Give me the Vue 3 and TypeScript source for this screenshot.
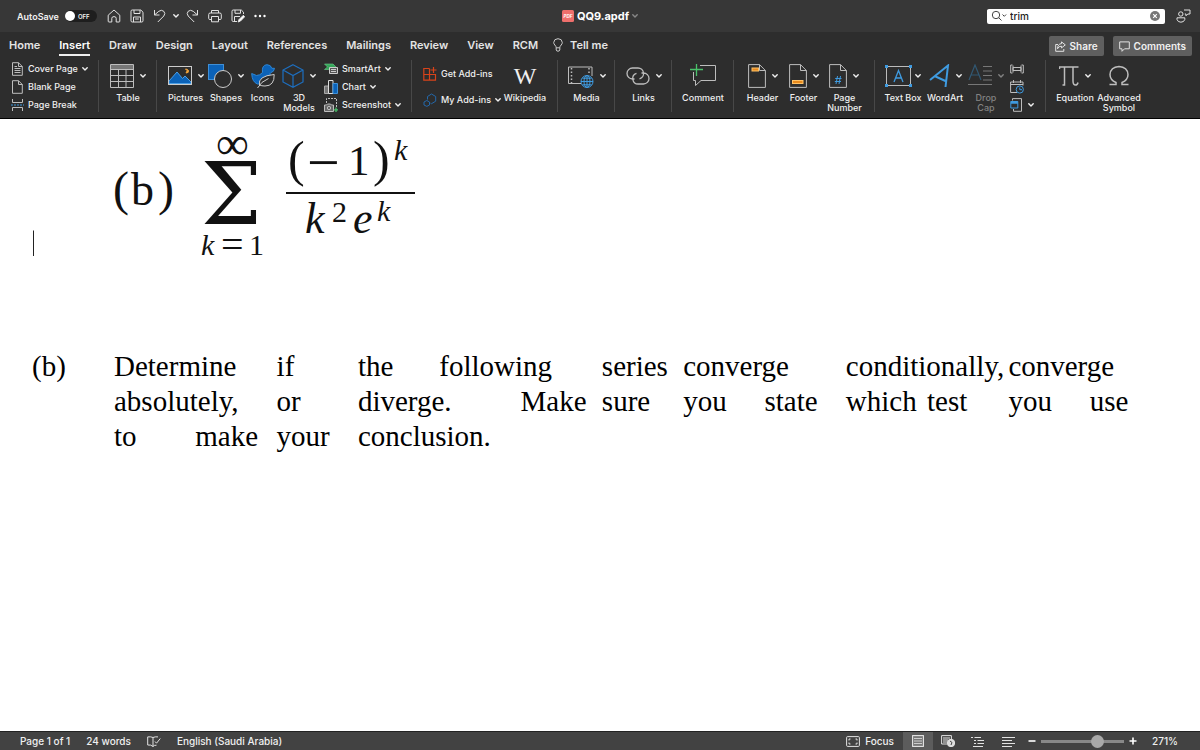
<script setup lang="ts">
import { h, ref } from 'vue'

const Chevron = () =>
  h('svg', { class: 'chev', viewBox: '0 0 6 6', width: 6, height: 6, 'aria-hidden': 'true' }, [
    h('path', {
      d: 'M.8 1.8 3 4l2.2-2.2',
      fill: 'none',
      stroke: 'currentColor',
      'stroke-width': 1.4,
      'stroke-linecap': 'round',
      'stroke-linejoin': 'round',
    }),
  ])

const tabs: string[] = ['Home', 'Insert', 'Draw', 'Design', 'Layout', 'References', 'Mailings', 'Review', 'View', 'RCM']
const activeTab = ref('Insert')
const search = ref('trim')
const zoomLevel = ref(71)
const autoSave = ref(false)

interface Word {
  text: string
  stop: number
}

const lines: Word[][] = [
  [
    { text: 'Determine', stop: 1 },
    { text: 'if', stop: 3 },
    { text: 'the', stop: 4 },
    { text: 'following', stop: 5 },
    { text: 'series', stop: 7 },
    { text: 'converge', stop: 8 },
    { text: 'conditionally,', stop: 10 },
    { text: 'converge', stop: 12 },
  ],
  [
    { text: 'absolutely,', stop: 1 },
    { text: 'or', stop: 3 },
    { text: 'diverge.', stop: 4 },
    { text: 'Make', stop: 6 },
    { text: 'sure', stop: 7 },
    { text: 'you', stop: 8 },
    { text: 'state', stop: 9 },
    { text: 'which', stop: 10 },
    { text: 'test', stop: 11 },
    { text: 'you', stop: 12 },
    { text: 'use', stop: 13 },
  ],
  [
    { text: 'to', stop: 1 },
    { text: 'make', stop: 2 },
    { text: 'your', stop: 3 },
    { text: 'conclusion.', stop: 4 },
  ],
]
</script>

<template>
  <div class="window">
    <header class="titlebar">
      <div class="quick">
        <label class="autosave">
          <span>AutoSave</span>
          <input v-model="autoSave" type="checkbox" class="sr" />
          <span class="toggle"><i></i>OFF</span>
        </label>
        <button class="ico home" aria-label="Home">
          <svg width="14" height="14" viewBox="0 0 14 14" class="line"><path d="M1.2 6.2 7 1l5.800 5.200V12.200q0 .8-.8.8H9.200V9.300Q9.200 7.600 7 7.600T4.800 9.300V13H2q-.8 0-.8-.8Z" /></svg>
        </button>
        <button class="ico" aria-label="Save">
          <svg width="14" height="14" viewBox="0 0 14 14" class="line"><path d="M1 2.200Q1 1 2.200 1H10.800L13 3.200V11.800Q13 13 11.800 13H2.200Q1 13 1 11.800ZM4 1V4.500H10V1M3.500 13V8H10.500V13M5.200 10H8.800" /></svg>
        </button>
        <button class="ico undo" aria-label="Undo">
          <svg width="13" height="14" viewBox="0 0 13 14" class="line"><path d="M1.500 1V6H6.500M1.700 5.800 5.800 2.300Q8.500.3 10.800 2.300 12.800 4.500 10.800 7L4.800 13" /></svg>
        </button>
        <button class="ico tight" aria-label="Undo history"><Chevron /></button>
        <button class="ico redo" aria-label="Redo">
          <svg width="13" height="14" viewBox="0 0 13 14" class="line"><path d="M11.500 1V6H6.500M11.300 5.800 7.200 2.300Q4.500.3 2.200 2.300.2 4.500 2.200 7L8.200 13" /></svg>
        </button>
        <button class="ico" aria-label="Print">
          <svg width="14" height="14" viewBox="0 0 14 14" class="line"><path d="M3.500 4V1.500H10.500V4M3.500 10.500H1.800Q.7 10.500.7 9.400V5.500Q.7 4 2.200 4H11.800Q13.300 4 13.300 5.500V9.400Q13.300 10.500 12.200 10.500H10.500M3.500 7.500H10.500V12.800H3.500Z" /></svg>
        </button>
        <button class="ico" aria-label="Save a copy">
          <svg width="14" height="14" viewBox="0 0 14 14" class="line"><path d="M6 12.500H2.200Q1 12.500 1 11.300V2.200Q1 1 2.200 1H10.300L12.500 3.200V5M4 1V4.300H9.500V1M3.500 12.500V7.500H9" /><path d="M7.200 13 8 10.600 12.300 6.300 13.700 7.700 9.500 12Z" fill="#fff" /></svg>
        </button>
        <button class="ico" aria-label="More">
          <svg width="12" height="4" viewBox="0 0 12 4" fill="#fff"><circle cx="1.500" cy="2" r="1.200" /><circle cx="6" cy="2" r="1.200" /><circle cx="10.500" cy="2" r="1.200" /></svg>
        </button>
      </div>
      <div class="doc-title">
        <svg width="12" height="12" viewBox="0 0 12 12" aria-hidden="true"><rect width="12" height="12" rx="1.500" fill="#ee6f6c" /><text x="6" y="7.800" font-size="4.500" font-weight="700" font-style="italic" fill="#fff" text-anchor="middle">PDF</text></svg>
        <strong>QQ9.apdf</strong>
        <span class="faint"><Chevron /></span>
      </div>
      <div class="title-right">
        <div class="search">
          <svg width="17" height="12" viewBox="0 0 17 12" fill="none" stroke="#444"><circle cx="5" cy="5" r="3.700" /><path d="M7.700 7.700 10.500 10.500M11.500 4.500 13.300 6.300 15.100 4.500" /></svg>
          <input v-model="search" type="text" aria-label="Search in document" />
          <button aria-label="Clear search">
            <svg width="10" height="10" viewBox="0 0 10 10"><circle cx="5" cy="5" r="5" fill="#777" /><path d="M3.200 3.200 6.800 6.800M6.800 3.200 3.200 6.800" stroke="#fff" stroke-width="1.200" /></svg>
          </button>
        </div>
        <button class="ico" aria-label="Account">
          <svg width="15" height="14" viewBox="0 0 15 14" class="line"><circle cx="4.800" cy="5" r="2.200" /><path d="M1 8.800H8.800V10.500Q8 13.200 4.900 13.200T1 10.500ZM8 1H14V5H11.800L10 6.800V5H8.800" /></svg>
        </button>
      </div>
    </header>

    <nav class="tabs">
      <button v-for="t in tabs" :key="t" class="tab" :class="{ active: t === activeTab }" @click="activeTab = t">{{ t }}</button>
      <button class="tab tell">
        <svg width="10" height="14" viewBox="0 0 10 14" fill="none" stroke="#ccc"><path d="M3.200 9.800Q3.200 8.300 1.800 7 .7 5.800.7 4.500.9.800 5 .7 9.100.8 9.300 4.500 9.300 5.800 8.200 7 6.800 8.300 6.800 9.800ZM3.200 9.800V12Q3.500 13.200 5 13.200T6.800 12V9.800" /></svg>
        Tell me
      </button>
      <div class="tab-actions">
        <button class="action">
          <svg width="11" height="11" viewBox="0 0 11 11" class="line"><path d="M3 3.500H.7V10.300H8.800V8M6.500.9 10.300 3.900 6.500 6.900V5.200Q3.700 5 2.500 7.800 2.700 2.900 6.500 2.600Z" /></svg>
          Share
        </button>
        <button class="action">
          <svg width="11" height="11" viewBox="0 0 11 11" class="line"><path d="M.7.900H10.300V7.800H5.500L3 10.300V7.800H.7Z" /></svg>
          Comments
        </button>
      </div>
    </nav>

    <section class="ribbon" aria-label="Insert">
      <div class="group pages">
        <div class="stack">
          <button class="row">
            <svg width="13" height="14" viewBox="0 0 13 14" class="grey"><path d="M1.500.7H7.500L11.300 4.500V13.300H1.500ZM7.500.7V4.500H11.300M3.500 4.500H6M3.500 6.500H9.500M3.500 8.500H9.500M3.500 10.500H9.500" /></svg>
            Cover Page <Chevron />
          </button>
          <button class="row">
            <svg width="13" height="14" viewBox="0 0 13 14" class="grey"><path d="M1.500.7H7.500L11.300 4.500V13.300H1.500ZM7.500.7V4.500H11.300" /></svg>
            Blank Page
          </button>
          <button class="row">
            <svg width="13" height="14" viewBox="0 0 13 14" class="grey"><path d="M1.500 1V4.500H11.500V1M1.500 13V9.500H11.500V13" /><path d="M0 7H13" stroke="#3f9be0" stroke-dasharray="2 1" /></svg>
            Page Break
          </button>
        </div>
      </div>

      <div class="group table">
        <button class="big">
          <span class="art"><svg width="24" height="24" viewBox="0 0 24 24" class="grey"><path d="M.5.500H23.500V23.500H.5ZM.5 5.500H23.500M.5 11.500H23.500M.5 17.500H23.500M8.500 5.500V23.500M16 5.500V23.500" /><path d="M1 3H23" stroke="#777" stroke-width="4" /></svg><Chevron /></span>
          Table
        </button>
      </div>

      <div class="group illus">
        <button class="big">
          <span class="art"><svg width="24" height="24" viewBox="0 0 24 24"><path d="M1 19.500V17L9 8 14.500 14.500 17 12 23 18V19.500Z" fill="#0b62b8" stroke="#4b9ee4" /><path d="M17.500 5Q20.500 6.500 18 9 21 9 20.500 6.500 19.500 5 17.500 5Z" fill="#f2a43c" stroke="#f2a43c" /><rect x=".5" y="2.500" width="23" height="18" fill="none" stroke="#ccc" /></svg><Chevron /></span>
          Pictures
        </button>
        <button class="big">
          <span class="art"><svg width="24" height="24" viewBox="0 0 24 24"><rect x=".5" y=".5" width="15" height="15" fill="#0b62b8" stroke="#3f8fd6" /><circle cx="15" cy="15" r="8.500" fill="#2d2d2d" stroke="#ccc" /></svg><Chevron /></span>
          Shapes
        </button>
        <button class="big">
          <span class="art"><svg width="24" height="24" viewBox="0 0 24 24"><path d="M11.500 8.500Q10.500 1 16 .7 20 .8 20.800 4.300H23.500Q23 8 20 8.500 19.500 9.500 18.500 10L21 12 12 20H6.500Q1 18 .7 9.500L5.500 11.500Q9 11.500 11.500 8.500Z" fill="#0b62b8" stroke="#2e86d4" /><path d="M8.500 21Q6.500 12 23.200 10.500 23.500 22 14 22 10.500 22 8.500 21Z" fill="#2d2d2d" stroke="#ccc" /><path d="M6.500 24Q10 17.500 17.500 14.500" fill="none" stroke="#ccc" /></svg></span>
          Icons
        </button>
        <button class="big">
          <span class="art"><svg width="22" height="24" viewBox="0 0 22 24" fill="none" stroke="#1d6fc0" stroke-width="1.200"><path d="M11 .8 21 6V18L11 23.200 1 18V6ZM1 6 11 11.500 21 6M11 11.500V23" /></svg><Chevron /></span>
          3D<br />Models
        </button>
        <div class="stack">
          <button class="row">
            <svg width="14" height="14" viewBox="0 0 14 14"><path d="M.5 2H9L12 5 9 7.500H.5L3.500 5Z" fill="#35a65a" stroke="#6bcf8a" stroke-width=".6" /><path d="M5.500 5.500H13.500V11.500H5.500Z" fill="#555" stroke="#ccc" /><path d="M7 7.500H12M7 9.500H12" stroke="#ccc" /></svg>
            SmartArt <Chevron />
          </button>
          <button class="row">
            <svg width="14" height="14" viewBox="0 0 14 14"><path d="M.5 6H4.500V13.500H.5Z" fill="#777" stroke="#aaa" /><path d="M4.500.5H9V13.500H4.500Z" fill="#2d2d2d" stroke="#ddd" /><path d="M9 3.500H13.500V13.500H9Z" fill="#0b62b8" stroke="#3f8fd6" /></svg>
            Chart <Chevron />
          </button>
          <button class="row">
            <svg width="14" height="14" viewBox="0 0 14 14" class="grey"><path d="M2.500 5V.5H12.500V9" stroke-dasharray="2 1" /><path d="M.5 7H2.500L3.500 6H6.500L7.500 7H9.500V13.500H.5Z" fill="#666" /><circle cx="5" cy="10" r="1.700" /><path d="M12 9.500V14M9.800 11.800H14" stroke="#4ac26b" stroke-width="1.300" /></svg>
            Screenshot <Chevron />
          </button>
        </div>
      </div>

      <div class="group addins">
        <div class="stack two">
          <button class="row">
            <svg width="14" height="14" viewBox="0 0 14 14" fill="none" stroke="#d8431a" stroke-width="1.200"><path d="M6.500 1.500H.8V13.200H12.500V7.500H.8M6.500 1.500V13.200M10.500 0V6M7.500 3H13.500" /></svg>
            Get Add-ins
          </button>
          <button class="row">
            <svg width="14" height="14" viewBox="0 0 14 14" fill="none" stroke="#2468aa"><path d="M4.500 6.500V3.500L8.500 1 12.700 3.500V8.200L8.500 10.700 7.500 10.200" /><path d="M3.800 7.500 6.500 9V12L3.800 13.400 1 12V9Z" /></svg>
            My Add-ins <Chevron />
          </button>
        </div>
        <button class="big">
          <span class="art wiki">W</span>
          Wikipedia
        </button>
      </div>

      <div class="group single">
        <button class="big">
          <span class="art"><svg width="26" height="24" viewBox="0 0 26 24" class="grey"><path d="M.5 3H24V12M13 19.500H.5V3" /><path d="M3.500 4V19M21 4V11" stroke-dasharray="1.500 2" stroke-width="1.500" /><circle cx="19" cy="17.500" r="6" fill="#2d2d2d" stroke="#3f9be0" /><path d="M13 17.500H25M19 11.500V23.500M14.500 14.200H23.500M14.500 20.800H23.500" stroke="#3f9be0" /><ellipse cx="19" cy="17.500" rx="3" ry="6" stroke="#3f9be0" /></svg><Chevron /></span>
          Media
        </button>
      </div>

      <div class="group single">
        <button class="big">
          <span class="art"><svg width="24" height="24" viewBox="0 0 24 24" class="grey" stroke-width="1.300"><path d="M8.500 15H6.500A5.500 5.500 0 0 1 6.500 4H12A5.500 5.500 0 0 1 13.500 14.800M15.500 9H17.500A5.500 5.500 0 0 1 17.500 20H12.500A5.500 5.500 0 0 1 10.500 9.300" /></svg><Chevron /></span>
          Links
        </button>
      </div>

      <div class="group comment">
        <button class="big">
          <span class="art"><svg width="26" height="24" viewBox="0 0 26 24" class="grey"><path d="M10 1.500H25.500V16.500H11L5.500 21.500V16.500H3.500V8" /><path d="M6.500 0V12M0 5.500H13" stroke="#4ac26b" stroke-width="1.300" /></svg></span>
          Comment
        </button>
      </div>

      <div class="group hf">
        <button class="big">
          <span class="art"><svg width="18" height="24" viewBox="0 0 18 24" class="grey"><path d="M.6.600H11.500L17.400 6.500V23.400H.6ZM11.500.6V6.500H17.400" /><rect x="4" y="4" width="6.500" height="3" fill="#e8891c" stroke="#ffc266" /></svg><Chevron /></span>
          Header
        </button>
        <button class="big">
          <span class="art"><svg width="18" height="24" viewBox="0 0 18 24" class="grey"><path d="M.6.600H11.500L17.400 6.500V23.400H.6ZM11.500.6V6.500H17.400" /><rect x="3.500" y="16.500" width="10.500" height="3" fill="#e8891c" stroke="#ffc266" /></svg><Chevron /></span>
          Footer
        </button>
        <button class="big">
          <span class="art"><svg width="18" height="24" viewBox="0 0 18 24" class="grey"><path d="M.6.600H11.500L17.400 6.500V23.400H.6ZM11.500.6V6.500H17.400" /><path d="M8.500 12 7 20M11.500 12 10 20M6.200 14.500H12.500M5.800 17.500H12" stroke="#3f9be0" /></svg><Chevron /></span>
          Page<br />Number
        </button>
      </div>

      <div class="group text">
        <button class="big">
          <span class="art close"><svg width="27" height="24" viewBox="0 0 27 24"><rect x="1.500" y="2.500" width="24" height="19" fill="none" stroke="#bbb" /><path d="M0 1H3V4H0ZM24 1H27V4H24ZM0 20H3V23H0ZM24 20H27V23H24Z" fill="#3f9be0" /><path d="M9 18 13.500 6.500 18 18M10.500 14H16.500" fill="none" stroke="#3f9be0" stroke-width="1.300" /></svg><Chevron /></span>
          Text Box
        </button>
        <button class="big">
          <span class="art"><svg width="21" height="24" viewBox="0 0 21 24" fill="none" stroke="#3f9be0" stroke-width="2"><path d="M1 16 19 1.500 16.500 23M5.500 12 17.500 17.500" /></svg><Chevron /></span>
          WordArt
        </button>
        <button class="big off" disabled>
          <span class="art"><svg width="24" height="24" viewBox="0 0 24 24" fill="none"><path d="M1 16 7 1 13 16M3.200 11H10.800" stroke="#315873" stroke-width="1.200" /><path d="M15 2.500H24M15 7H24M15 11.500H24M15 16H24M0 20.500H24" stroke="#777" /></svg><Chevron /></span>
          Drop<br />Cap
        </button>
        <div class="stack icons">
          <button class="row" aria-label="Signature line"><svg width="14" height="14" viewBox="0 0 14 14" class="grey"><path d="M2.500 3H.7V11H2.500M11.500 3H13.300V11H11.500M3 5.500H11V8.500H3ZM3 3.500V10.500M11 3.500V10.500" /></svg></button>
          <button class="row" aria-label="Date and time"><svg width="14" height="14" viewBox="0 0 14 14" class="grey"><path d="M7 12.500H.6V2H13V5.500M.6 4.500H13M3.500 0V3M10.500 0V3" /><circle cx="9.800" cy="9.500" r="3.600" stroke="#3f9be0" /><path d="M9.800 7.500V9.700H12" stroke="#3f9be0" /></svg></button>
          <button class="row" aria-label="Object"><svg width="14" height="14" viewBox="0 0 14 14" class="grey"><path d="M2.500 2.500V.6H11.500V13.300H3.500V11" /><path d="M.8 3.500H7.800V10H.8Z" stroke="#3f9be0" /><path d="M.8 4.500H7.800" stroke="#3f9be0" stroke-width="2.500" /></svg><Chevron /></button>
        </div>
      </div>

      <div class="group symbols">
        <button class="big">
          <span class="art"><svg width="20" height="24" viewBox="0 0 20 24" class="grey" stroke-width="1.500"><path d="M.5 5V3H19.500M5.500 3V21H3.500M14 3V17Q14 21 16.500 21 18.500 21 19 18.500" /></svg><Chevron /></span>
          Equation
        </button>
        <button class="big">
          <span class="art"><svg width="20" height="24" viewBox="0 0 20 24" class="grey" stroke-width="1.500"><path d="M.5 20.500H7V18.500Q1 16 1 10.500 1.500 3 10 2.500 18.500 3 19 10.500 19 16 13 18.500V20.500H19.500" /></svg></span>
          Advanced<br />Symbol
        </button>
      </div>
    </section>

    <main class="page">
      <svg class="formula" width="400" height="151" viewBox="0 -6 400 151" role="img" aria-label="Series formula">
        <path d="M1.500 105.500V131" stroke="#222" stroke-width="1" />
        <text x="81" y="80" font-size="48">(</text>
        <text x="99" y="80" font-size="46">b</text>
        <text x="126" y="80" font-size="48">)</text>
        <text x="184" y="34" font-size="46">∞</text>
        <text x="169" y="99" font-size="86" class="operator">Σ</text>
        <text x="169" y="130" font-size="30" font-style="italic">k</text>
        <text x="189" y="133" font-size="40">=</text>
        <text x="217" y="130" font-size="30">1</text>
        <text x="256" y="51" font-size="50">(</text>
        <text x="275" y="57" font-size="58">−</text>
        <text x="316" y="50" font-size="43">1</text>
        <text x="341" y="51" font-size="50">)</text>
        <text x="362" y="35" font-size="30" font-style="italic">k</text>
        <path d="M254 68H383" stroke="#111" stroke-width="2" />
        <text x="273" y="108" font-size="44" font-style="italic">k</text>
        <text x="300" y="97" font-size="30">2</text>
        <text x="321" y="108" font-size="44" font-style="italic">e</text>
        <text x="345" y="96" font-size="30" font-style="italic">k</text>
      </svg>

      <div class="question">
        <span class="marker">(b)</span>
        <div class="para">
          <p v-for="(line, i) in lines" :key="i">
            <span v-for="w in line" :key="w.stop" :style="{ gridColumnStart: w.stop }">{{ w.text }}</span>
          </p>
        </div>
      </div>
    </main>

    <footer class="status">
      <span>Page 1 of 1</span>
      <span>24 words</span>
      <svg width="14" height="11" viewBox="0 0 14 11" class="line"><path d="M6 1.500V10.500M6 1.500Q4 .5.700.900V9Q4 8.500 6 10.500 7 9 9.500 9.200M6 1.500Q8 .5 11 .9M8 5.500 9.500 7.200 13.300 2.500" /></svg>
      <span>English (Saudi Arabia)</span>
      <div class="views">
        <button class="focus">
          <svg width="14" height="11" viewBox="0 0 14 11" class="line"><rect x=".6" y=".6" width="12.800" height="9.800" rx="1" /><path d="M3 4.500V3H4.500M9.500 3H11V4.500M11 6.500V8H9.500M4.500 8H3V6.500" /></svg>
          Focus
        </button>
        <button class="view current" aria-label="Print layout"><svg width="12" height="12" viewBox="0 0 12 12"><rect x=".6" y=".6" width="10.800" height="10.800" fill="#777" stroke="#eee" /><path d="M2 3.500H10M2 6H10M2 8.500H10" stroke="#ccc" /></svg></button>
        <button class="view" aria-label="Web layout"><svg width="14" height="12" viewBox="0 0 14 12" class="line"><path d="M6 9H.6V.6H10.400V4M2 3H9M2 5H7M2 7H6" /><circle cx="10" cy="8" r="3.700" fill="#ddd" /><path d="M9 6 11 7.500 10 10" stroke="#444" /></svg></button>
        <button class="view" aria-label="Outline"><svg width="14" height="11" viewBox="0 0 14 11" class="line"><path d="M0 1.500H2M3.500 1.500H10M3 4.500H5M6.500 4.500H13M3 7.500H5M6.500 7.500H13M2 10.500H12" /></svg></button>
        <button class="view" aria-label="Draft"><svg width="13" height="11" viewBox="0 0 13 11" class="line"><path d="M0 1.500H13M0 4.500H10M0 7.500H13M0 10.500H10" /></svg></button>
        <button class="step" aria-label="Zoom out"><svg width="8" height="8" viewBox="0 0 8 8"><path d="M.5 4H7.500" stroke="#fff" stroke-width="1.600" /></svg></button>
        <input v-model="zoomLevel" type="range" min="0" max="100" aria-label="Zoom" />
        <button class="step" aria-label="Zoom in"><svg width="8" height="8" viewBox="0 0 8 8"><path d="M.5 4H7.500M4 .5V7.500" stroke="#fff" stroke-width="1.600" /></svg></button>
        <span class="percent">271%</span>
      </div>
    </footer>
  </div>
</template>

<style>
body {
  margin: 0;
  background: #fff;
}
</style>

<style scoped>
.window {
  display: flex;
  flex-direction: column;
  min-height: 100vh;
  font-family: Inter, "Liberation Sans", sans-serif;
  color: #f0f0f0;
  background: #fff;
}
button {
  font: inherit;
  color: inherit;
  background: none;
  border: 0;
  padding: 0;
  margin: 0;
  white-space: nowrap;
}
svg {
  flex: none;
  display: block;
}
.line {
  fill: none;
  stroke: #e2e2e2;
  stroke-linejoin: round;
}
.grey {
  fill: none;
  stroke: #bdbdbd;
}
.sr {
  position: absolute;
  opacity: 0;
  width: 1px;
  height: 1px;
  margin: 0;
}
.titlebar {
  display: grid;
  grid-template-columns: 1fr auto 1fr;
  align-items: center;
  height: 32px;
  background: #373737;
}
.quick {
  display: flex;
  align-items: center;
  gap: 9px;
  padding-left: 17px;
}
.tight {
  margin: 0 -2px;
}
.autosave {
  display: flex;
  align-items: center;
  gap: 6px;
  font-size: 9px;
  font-weight: 600;
  margin-right: 1px;
}
.toggle {
  display: flex;
  align-items: center;
  gap: 3px;
  width: 32px;
  height: 12px;
  border-radius: 6px;
  background: #1e1e1e;
  font-size: 6px;
}
.toggle i {
  width: 10px;
  height: 10px;
  border-radius: 50%;
  background: #fff;
}
.doc-title {
  display: flex;
  align-items: center;
  gap: 3px;
  font-size: 11px;
  color: #fff;
}
.faint {
  color: #888;
}
.title-right {
  display: flex;
  align-items: center;
  justify-content: flex-end;
  gap: 11px;
  padding-right: 9px;
}
.search {
  display: flex;
  align-items: center;
  gap: 2px;
  width: 178px;
  height: 15px;
  box-sizing: border-box;
  padding: 0 5px 0 4px;
  border-radius: 2px;
  background: #fff;
}
.search input {
  flex: 1;
  min-width: 0;
  border: 0;
  padding: 0;
  background: none;
  outline: none;
  font: 500 10px Inter, sans-serif;
  color: #222;
}
.tabs {
  display: flex;
  align-items: center;
  gap: 19px;
  height: 28px;
  padding: 0 8px 0 9px;
  background: #2d2d2d;
}
.tab {
  height: 20px;
  box-sizing: border-box;
  border-bottom: 2px solid transparent;
  font-size: 11px;
  line-height: 16px;
  font-weight: 600;
  color: #e4e4e4;
}
.tab.active {
  border-color: #eee;
  color: #fff;
}
.tell {
  display: flex;
  align-items: center;
  gap: 7px;
  margin-left: -4px;
}
.tab-actions {
  display: flex;
  gap: 9px;
  margin-left: auto;
}
.action {
  display: flex;
  align-items: center;
  gap: 4px;
  height: 20px;
  padding: 0 6px;
  border-radius: 2px;
  background: #5f5f5f;
  font-size: 10px;
  font-weight: 600;
}
.ribbon {
  display: flex;
  align-items: stretch;
  height: 58px;
  background: #2d2d2d;
  border-bottom: 1px solid #000;
  font-size: 9px;
  font-weight: 500;
  line-height: 10px;
}
.group {
  position: relative;
  display: grid;
  box-sizing: border-box;
  align-items: start;
  justify-items: center;
  flex: none;
}
.group:not(:last-child)::after {
  content: "";
  position: absolute;
  right: 0;
  top: 0;
  height: 52px;
  width: 1px;
  background: #484848;
}
.pages {
  width: 99px;
  padding-left: 11px;
}
.table {
  width: 58px;
}
.illus {
  width: 255px;
  padding-left: 9px;
  grid-template-columns: 39px 42px 31px 42px auto;
}
.addins {
  width: 146px;
  padding-left: 11px;
  grid-template-columns: 80px 44px;
}
.single {
  width: 57px;
}
.comment {
  width: 62px;
}
.hf {
  width: 141px;
  padding-left: 8px;
  grid-template-columns: 41px 41px 41px;
}
.text {
  width: 171px;
  padding-left: 7px;
  grid-template-columns: 42px 42px 40px auto;
}
.symbols {
  flex: 1;
  justify-content: start;
  padding-left: 7px;
  grid-template-columns: 44px 44px;
}
.big {
  margin-top: 4px;
  line-height: 10px;
  text-align: center;
}
.big.off {
  color: #828282;
}
.art {
  display: flex;
  align-items: center;
  justify-content: center;
  gap: 6px;
  height: 24px;
  margin-bottom: 5px;
}
.art.close {
  gap: 3px;
}
.wiki {
  font: 24px "Liberation Serif", serif;
  line-height: 24px;
}
.stack {
  justify-self: start;
  display: flex;
  flex-direction: column;
}
.illus .stack,
.text .stack {
  margin-left: 4px;
}
.row {
  display: flex;
  align-items: center;
  gap: 4px;
  height: 18px;
}
.stack.two {
  padding-top: 5px;
  gap: 8px;
}
.chev {
  flex: none;
}
.page {
  flex: 1;
  padding: 0 29px 0 32px;
  color: #111;
  font-family: "Liberation Serif", serif;
}
.formula {
  fill: #111;
  font-family: "Liberation Serif", serif;
}
.operator {
  font-family: "DejaVu Serif", serif;
}
.question {
  display: grid;
  grid-template-columns: 82px 1fr;
  margin-top: 79px;
  font-size: 29px;
  line-height: 35px;
  color: #000;
}
.para p {
  display: grid;
  grid-template-columns: repeat(13, minmax(0, 1fr));
  margin: 0;
  white-space: nowrap;
}
.status {
  display: flex;
  align-items: center;
  gap: 16px;
  height: 19px;
  padding: 0 22px 0 20px;
  border-top: 1px solid #222;
  box-sizing: border-box;
  background: #424242;
  font-size: 10px;
  font-weight: 500;
}
.views {
  display: flex;
  align-items: center;
  margin-left: auto;
  height: 100%;
}
.focus {
  display: flex;
  align-items: center;
  gap: 5px;
  margin-right: 9px;
}
.view {
  display: grid;
  place-items: center;
  width: 30px;
  height: 100%;
}
.current {
  background: #5c5c5c;
}
.step {
  margin: 0 5px;
}
.views input {
  appearance: none;
  width: 83px;
  height: 13px;
  margin: 0;
  background: linear-gradient(#888, #888) center / 100% 3px no-repeat;
}
.views input::-webkit-slider-thumb {
  appearance: none;
  width: 13px;
  height: 13px;
  border-radius: 50%;
  background: #a8a8a8;
}
.percent {
  width: 26px;
  margin-left: 10px;
}
</style>
